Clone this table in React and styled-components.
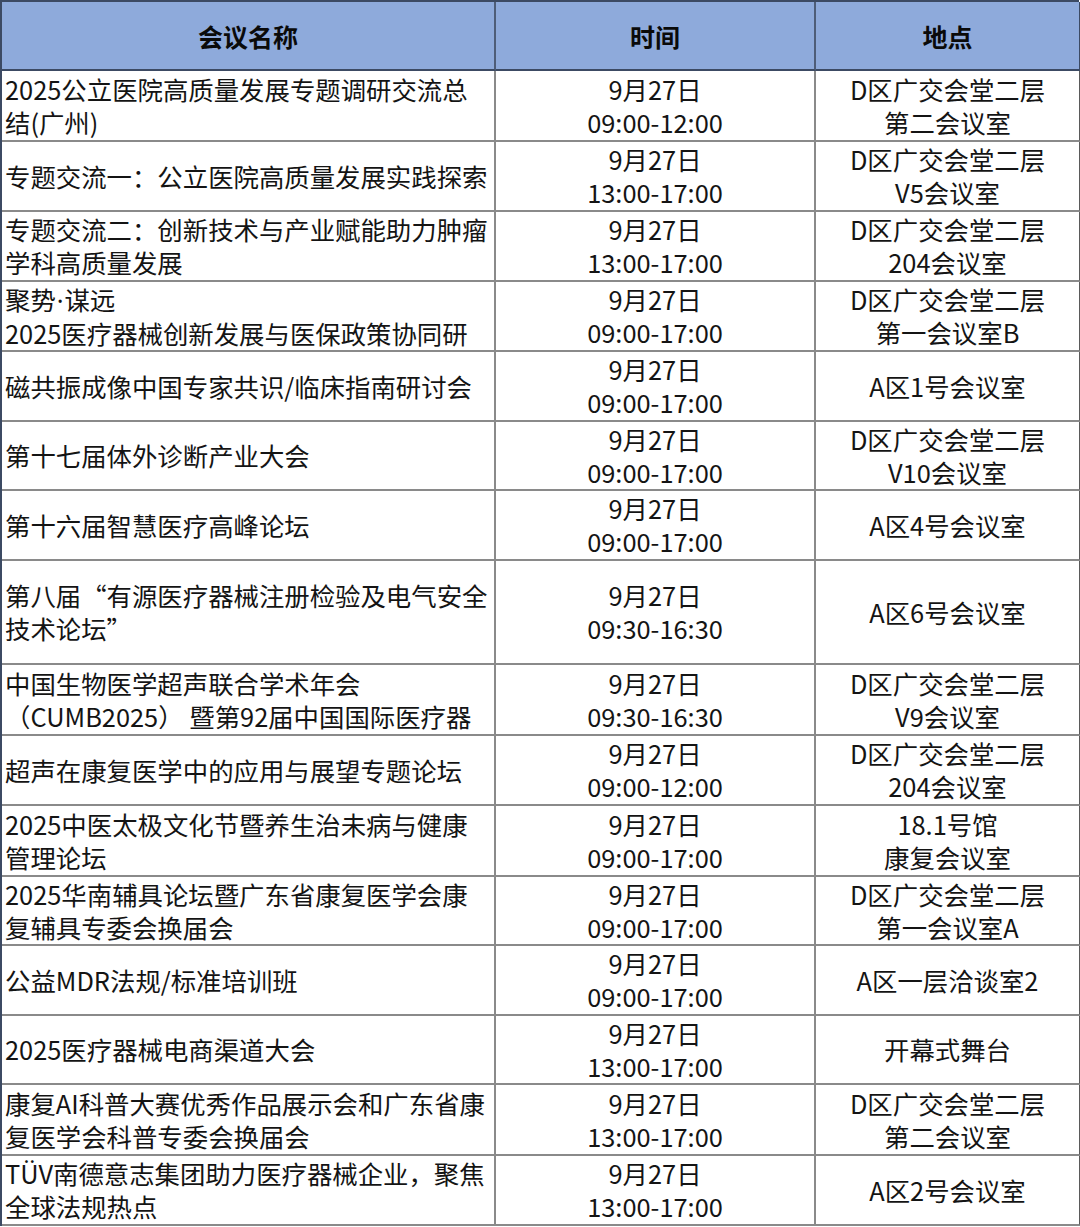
import React from "react";
import styled, { createGlobalStyle } from "styled-components";

const GlobalStyle = createGlobalStyle`
  html, body {
    margin: 0;
    padding: 0;
    background: #ffffff;
  }
  body {
    font-family: "Noto Sans CJK SC", "Noto Sans", sans-serif;
    color: #111;
  }
`;

const Dot = styled.span`
  font-family: "Noto Sans", "Liberation Sans", sans-serif;
  padding: 0 1px;
`;

const rows = [
  {
    name: ["2025公立医院高质量发展专题调研交流总", "结(广州)"],
    time: "09:00-12:00",
    place: ["D区广交会堂二层", "第二会议室"],
    h: 71,
  },
  {
    name: ["专题交流一：公立医院高质量发展实践探索"],
    time: "13:00-17:00",
    place: ["D区广交会堂二层", "V5会议室"],
    h: 70,
  },
  {
    name: ["专题交流二：创新技术与产业赋能助力肿瘤", "学科高质量发展"],
    time: "13:00-17:00",
    place: ["D区广交会堂二层", "204会议室"],
    h: 70,
  },
  {
    name: [
      <>
        聚势<Dot>·</Dot>谋远
      </>,
      "2025医疗器械创新发展与医保政策协同研",
    ],
    time: "09:00-17:00",
    place: ["D区广交会堂二层", "第一会议室B"],
    h: 70,
  },
  {
    name: ["磁共振成像中国专家共识/临床指南研讨会"],
    time: "09:00-17:00",
    place: ["A区1号会议室"],
    h: 70,
  },
  {
    name: ["第十七届体外诊断产业大会"],
    time: "09:00-17:00",
    place: ["D区广交会堂二层", "V10会议室"],
    h: 69,
  },
  {
    name: ["第十六届智慧医疗高峰论坛"],
    time: "09:00-17:00",
    place: ["A区4号会议室"],
    h: 70,
  },
  {
    name: ["第八届“有源医疗器械注册检验及电气安全", "技术论坛”"],
    time: "09:30-16:30",
    place: ["A区6号会议室"],
    h: 104,
  },
  {
    name: ["中国生物医学超声联合学术年会", "（CUMB2025） 暨第92届中国国际医疗器"],
    time: "09:30-16:30",
    place: ["D区广交会堂二层", "V9会议室"],
    h: 71,
  },
  {
    name: ["超声在康复医学中的应用与展望专题论坛"],
    time: "09:00-12:00",
    place: ["D区广交会堂二层", "204会议室"],
    h: 70,
  },
  {
    name: ["2025中医太极文化节暨养生治未病与健康", "管理论坛"],
    time: "09:00-17:00",
    place: ["18.1号馆", "康复会议室"],
    h: 71,
  },
  {
    name: ["2025华南辅具论坛暨广东省康复医学会康", "复辅具专委会换届会"],
    time: "09:00-17:00",
    place: ["D区广交会堂二层", "第一会议室A"],
    h: 69,
  },
  {
    name: ["公益MDR法规/标准培训班"],
    time: "09:00-17:00",
    place: ["A区一层洽谈室2"],
    h: 70,
  },
  {
    name: ["2025医疗器械电商渠道大会"],
    time: "13:00-17:00",
    place: ["开幕式舞台"],
    h: 69,
  },
  {
    name: ["康复AI科普大赛优秀作品展示会和广东省康", "复医学会科普专委会换届会"],
    time: "13:00-17:00",
    place: ["D区广交会堂二层", "第二会议室"],
    h: 71,
  },
  {
    name: ["TÜV南德意志集团助力医疗器械企业，聚焦", "全球法规热点"],
    time: "13:00-17:00",
    place: ["A区2号会议室"],
    h: 70,
  },
];

const Table = styled.div`
  display: grid;
  grid-template-columns: 494px 320px 265px;
  width: 1079px;
  border-left: 2px solid #3c4a63;
  border-top: 2px solid #3c4a63;
  box-sizing: border-box;
`;

const HeadCell = styled.div`
  height: 69px;
  box-sizing: border-box;
  background: #8eaadb;
  border-right: 2px solid ${(p) => (p.$last ? "#3c4a63" : "#4e5d78")};
  border-bottom: 2px solid #3c4a63;
  display: flex;
  align-items: center;
  justify-content: center;
  font-size: 25px;
  font-weight: 700;
  color: #0a0a0a;
`;

const Cell = styled.div`
  height: ${(p) => p.$h}px;
  box-sizing: border-box;
  border-right: 2px solid ${(p) => (p.$last ? "#5a5a5a" : "#8a8a8a")};
  border-bottom: 2px solid #8a8a8a;
  display: flex;
  flex-direction: column;
  justify-content: center;
  align-items: ${(p) => (p.$left ? "flex-start" : "center")};
  padding: 0 ${(p) => (p.$left ? "3px" : "0")};
  font-size: 25.4px;
  line-height: 33px;
  white-space: nowrap;
  overflow: hidden;
  color: #141414;
`;

const Line = styled.span`
  display: block;
`;

export default function App() {
  return (
    <>
      <GlobalStyle />
      <Table>
        <HeadCell>会议名称</HeadCell>
        <HeadCell>时间</HeadCell>
        <HeadCell $last>地点</HeadCell>
        {rows.map((r, i) => (
          <React.Fragment key={i}>
            <Cell $h={r.h} $left>
              {r.name.map((t, j) => (
                <Line key={j}>{t}</Line>
              ))}
            </Cell>
            <Cell $h={r.h}>
              <Line>9月27日</Line>
              <Line>{r.time}</Line>
            </Cell>
            <Cell $h={r.h} $last>
              {r.place.map((t, j) => (
                <Line key={j}>{t}</Line>
              ))}
            </Cell>
          </React.Fragment>
        ))}
      </Table>
    </>
  );
}
